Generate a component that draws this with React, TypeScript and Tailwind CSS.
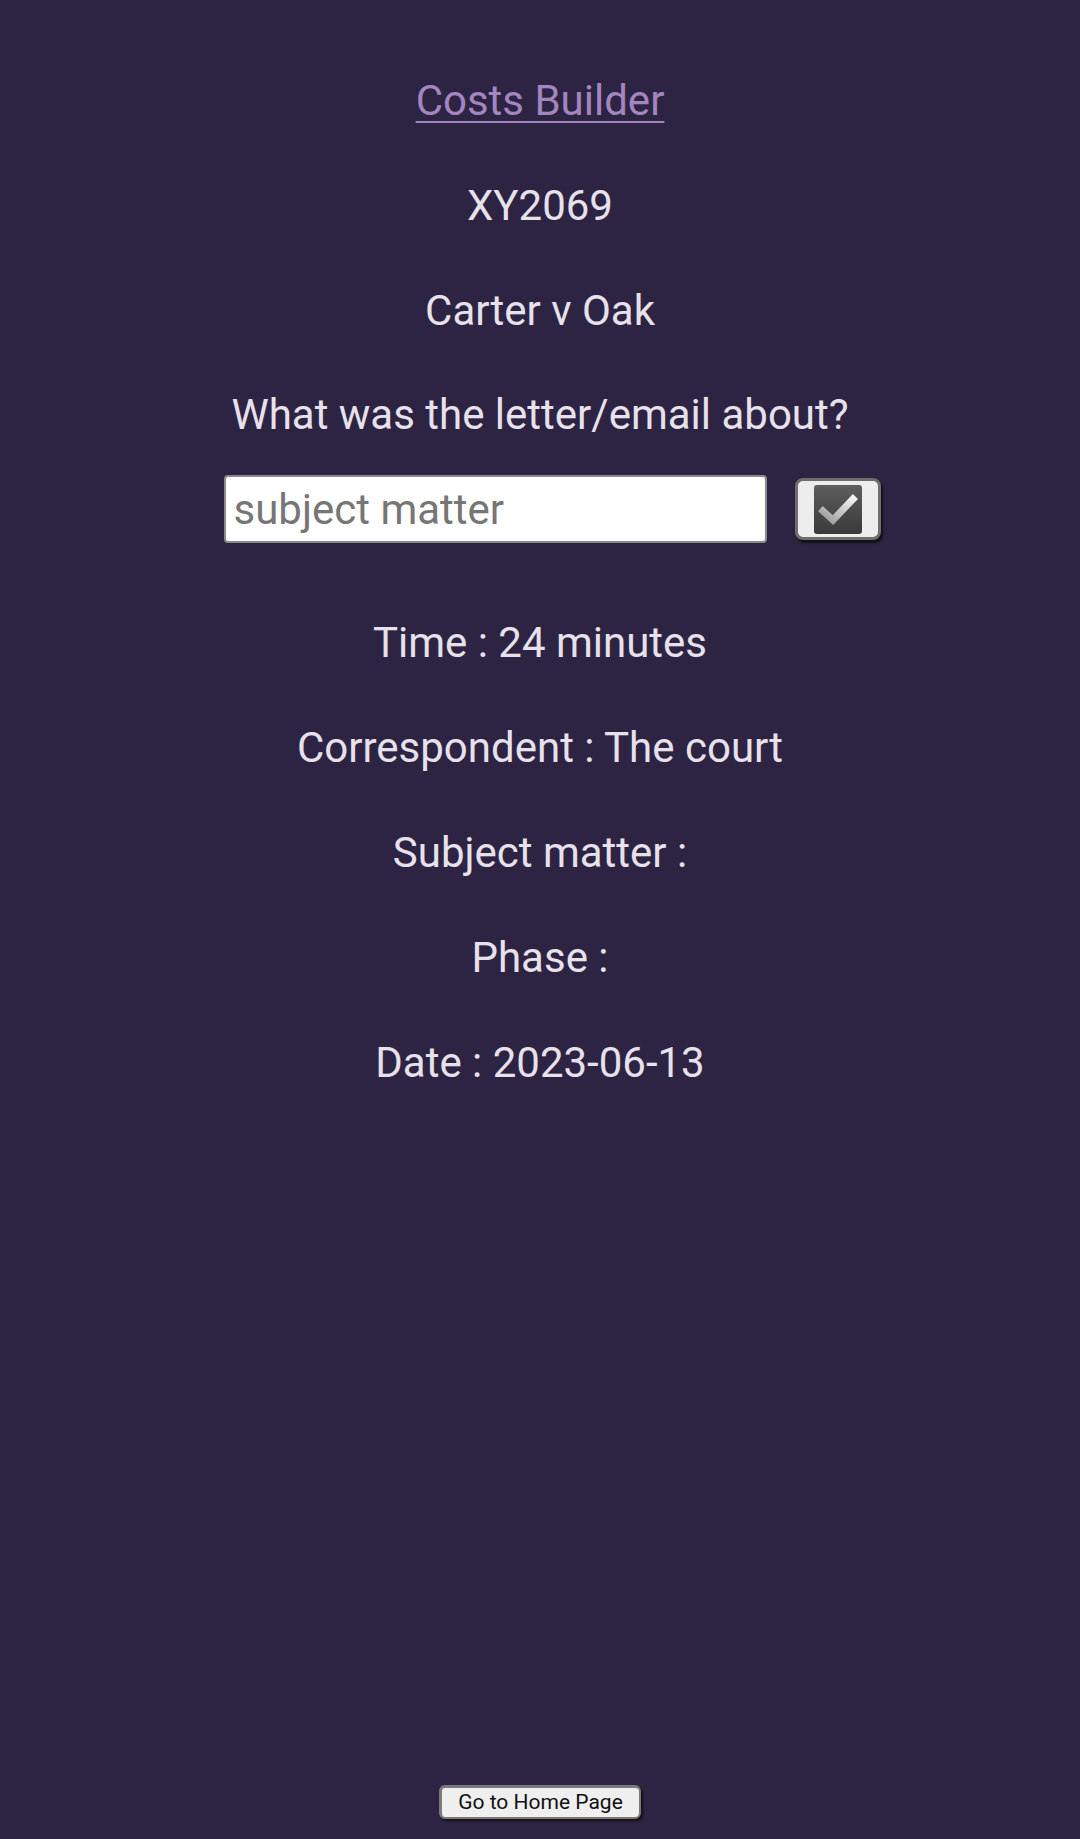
import React, { useState } from "react";

function CheckIcon() {
	return (
		<svg width="48" height="49" viewBox="0 0 48 49">
			<defs>
				<linearGradient id="box" x1="0" y1="0" x2="0" y2="1">
					<stop offset="0" stopColor="#5e5e5e" />
					<stop offset="1" stopColor="#3a3a3a" />
				</linearGradient>
				<linearGradient id="tick" x1="0" y1="1" x2="1" y2="0">
					<stop offset="0" stopColor="#9a9a9a" />
					<stop offset="1" stopColor="#f2f2f2" />
				</linearGradient>
			</defs>
			<rect x="0" y="0" width="48" height="49" rx="3" fill="url(#box)" />
			<path d="M9 26 L19 35 L39 14" fill="none" stroke="url(#tick)" strokeWidth="7" strokeLinecap="square" strokeLinejoin="miter" />
		</svg>
	);
}

export default function App() {
	const [subject, setSubject] = useState("");

	return (
		<div className="min-h-screen bg-[#2d2443] flex flex-col items-center text-[#e6e1ea] font-['Roboto',sans-serif]">
			<a href="#" className="mt-[77px] text-[42px] leading-[48px] text-[#a385bf] underline underline-offset-[6px] decoration-2">
				Costs Builder
			</a>
			<p className="mt-[57px] text-[42px] leading-[48px]">XY2069</p>
			<p className="mt-[57px] text-[42px] leading-[48px]">Carter v Oak</p>
			<p className="mt-[56px] text-[42px] leading-[48px]">What was the letter/email about?</p>

			<div className="mt-[36px] flex items-center gap-[28px] pl-[24px]">
				<input
					value={subject}
					onChange={(e) => setSubject(e.target.value)}
					placeholder="subject matter"
					className="w-[543px] h-[68px] bg-white rounded-[4px] border-2 border-[#8a8a8a] px-[8px] text-[42px] text-[#222] placeholder:text-[#767676] outline-none"
				/>
				<button className="w-[86px] h-[62px] rounded-[8px] bg-[#ededed] border-[3px] border-[#6e6e6e] shadow-[2px_3px_2px_#111] flex items-center justify-center">
					<CheckIcon />
				</button>
			</div>

			<p className="mt-[76px] text-[42px] leading-[48px]">Time : 24 minutes</p>
			<p className="mt-[57px] text-[42px] leading-[48px]">Correspondent : The court</p>
			<p className="mt-[57px] text-[42px] leading-[48px]">Subject matter :</p>
			<p className="mt-[57px] text-[42px] leading-[48px]">Phase :</p>
			<p className="mt-[57px] text-[42px] leading-[48px]">Date : 2023-06-13</p>

			<button className="mt-auto mb-[20px] w-[202px] h-[34px] rounded-[6px] bg-[#efefef] border-2 border-t-[3px] border-l-[3px] border-[#7a7a7a] shadow-[2px_2px_2px_#111] text-[21px] leading-none text-[#111]">
				Go to Home Page
			</button>
		</div>
	);
}
